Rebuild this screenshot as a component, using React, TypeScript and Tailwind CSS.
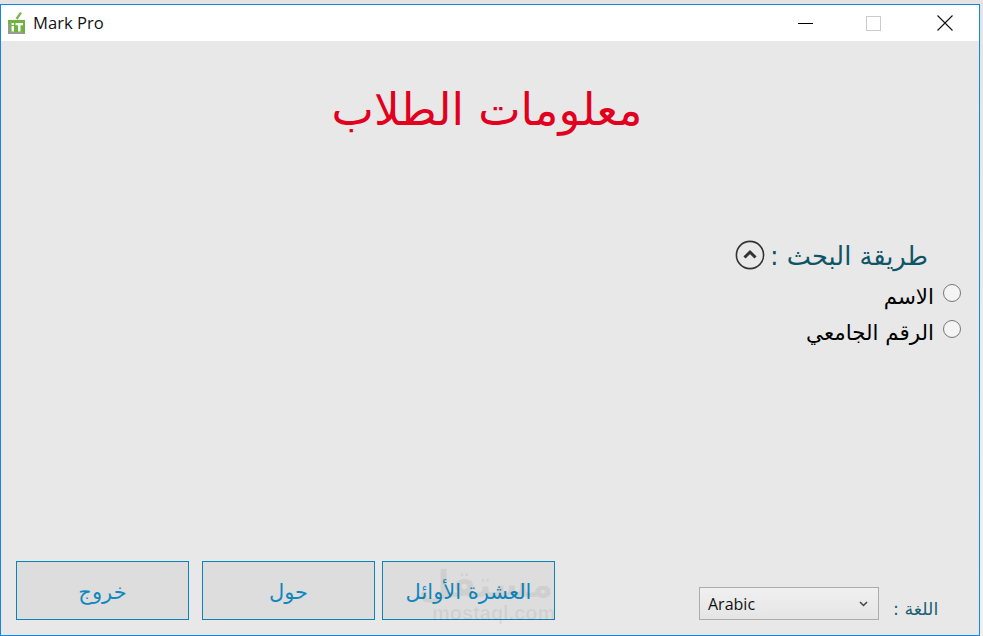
export default function App() {
  const arabic = "font-['Segoe_UI','DejaVu_Sans',sans-serif]";
  const btn = `flex h-[59px] w-[173px] items-center justify-center border border-[#0a84b8] bg-[#dddddd] pt-[4px] text-[21px] leading-none text-[#1088bf] ${arabic}`;
  return (
    <div className="h-[636px] w-[983px] overflow-hidden bg-gradient-to-b from-[#e4e4e4] to-[#f0f0f0] pt-[4px]">
      <div className="flex h-[632px] w-[980px] flex-col border border-[#1585e6] bg-[#e8e8e8] font-['Open_Sans',sans-serif]">
        <header className="flex h-[36px] shrink-0 items-center bg-white pl-[7px]">
          <svg width="17" height="22" viewBox="0 0 17 22" className="-mt-[1px]">
            <path d="M8.5 7 L13 0.5" stroke="#7ab648" strokeWidth="2.2" />
            <rect x="0" y="8" width="17" height="14" fill="#6fb43f" />
            <rect x="0" y="12" width="2" height="10" fill="#9a9a9a" />
            <rect x="2" y="20" width="13" height="2" fill="#9a9a9a" />
            <rect x="3.5" y="14" width="2.5" height="5.5" fill="#fff" />
            <rect x="3.5" y="11" width="2.5" height="2" fill="#fff" />
            <path d="M7.5 11 H15 V13.2 H12.5 V19.5 H10 V13.2 H7.5 Z" fill="#fff" />
          </svg>
          <span className="ml-[8px] mt-[1px] font-['Open_Sans',sans-serif] text-[16.6px] text-[#111]">Mark Pro</span>
          <div className="ml-auto flex items-center">
            <div className="h-[1px] w-[15px] bg-black" />
            <div className="ml-[53px] h-[15px] w-[15px] border border-[#cccccc]" />
            <svg width="16" height="16" viewBox="0 0 16 16" className="ml-[56px] mr-[26px]">
              <path d="M0.5 0.5 L15.5 15.5 M15.5 0.5 L0.5 15.5" stroke="#111" strokeWidth="1.1" />
            </svg>
          </div>
        </header>
        <main dir="rtl" className="flex flex-1 flex-col">
          <h1 className={`mt-[41px] pr-[6px] text-center text-[45px] leading-[56px] text-[#e2001f] ${arabic}`}>معلومات الطلاب</h1>
          <section className="mt-[102px] flex flex-col pr-[51px]">
            <div className={`flex items-center gap-[5px] text-[25.7px] leading-[32px] text-[#0f5566] ${arabic}`}>
              <span>طريقة البحث :</span>
              <svg width="30" height="30" viewBox="0 0 30 30" className="-mt-[3px]">
                <circle cx="15" cy="15" r="13.6" fill="none" stroke="#333" strokeWidth="1.6" />
                <path d="M9.5 17.5 L15 12 L20.5 17.5" fill="none" stroke="#333" strokeWidth="3" />
              </svg>
            </div>
            <div className={`-mr-[33px] mt-[11px] flex items-center gap-[9px] text-[21.4px] leading-[28px] text-black ${arabic}`}>
              <span className="-mt-[9px] h-[18px] w-[18px] rounded-full border border-[#777] bg-[#f4f4f4]" />
              <span>الاسم</span>
            </div>
            <div className={`-mr-[33px] mt-[8px] flex items-center gap-[9px] text-[21.4px] leading-[28px] text-black ${arabic}`}>
              <span className="-mt-[9px] h-[18px] w-[18px] rounded-full border border-[#777] bg-[#f4f4f4]" />
              <span>الرقم الجامعي</span>
            </div>
          </section>
          <footer dir="ltr" className="mt-auto mb-[15px] flex items-end pl-[15px]">
            <button className={btn}>خروج</button>
            <button className={`${btn} ml-[13px]`}>حول</button>
            <button className={`${btn} relative ml-[7px]`}>
              العشرة الأوائل
              <span aria-hidden className="pointer-events-none absolute inset-0 text-[#000]/[0.06]">
                <span className={`absolute left-[35px] top-[-2px] text-[37px] font-bold leading-[50px] ${arabic}`}>مستقل</span>
                <span className="absolute left-[49px] top-[41px] font-['Liberation_Sans',sans-serif] text-[20px] font-bold leading-[20px]">mostaql.com</span>
              </span>
            </button>
            <div className="ml-[144px] flex h-[33px] w-[180px] items-center justify-between border border-[#acacac] bg-gradient-to-b from-[#f0f0f0] to-[#e5e5e5] pl-[8px] pr-[10px] pt-[1px] font-['Open_Sans',sans-serif] text-[16px] text-[#111]">
              <span>Arabic</span>
              <svg width="9" height="6" viewBox="0 0 9 6">
                <path d="M1 1 L4.5 4.5 L8 1" fill="none" stroke="#444" strokeWidth="1.5" />
              </svg>
            </div>
            <span className={`ml-[14px] mb-[-1px] text-[17.5px] leading-[24px] text-[#1e5f73] ${arabic}`}>: اللغة</span>
          </footer>
        </main>
      </div>
    </div>
  );
}
